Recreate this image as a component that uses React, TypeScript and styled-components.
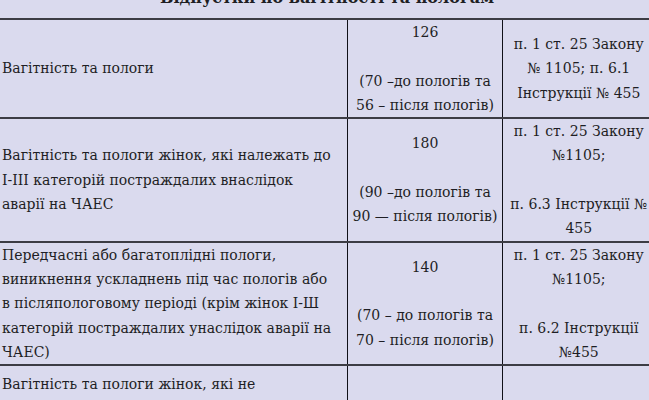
import React from "react";
import styled, { createGlobalStyle } from "styled-components";

const Global = createGlobalStyle`
  html, body {
    margin: 0;
    padding: 0;
    background: #dadaee;
    overflow: hidden;
  }
  body {
    font-family: "DejaVu Serif", "Liberation Serif", serif;
    color: #1e1e24;
  }
`;

const Page = styled.div`
  width: 649px;
  height: 400px;
  overflow: hidden;
`;

const Table = styled.table`
  border-collapse: collapse;
  table-layout: fixed;
  width: 655px;
  margin-top: -22px;
  margin-left: -1px;
  font-size: 14px;
  line-height: 24.3px;
`;

const Col = styled.col<{ $w: number }>`
  width: ${(p) => p.$w}px;
`;

const HeadCell = styled.th`
  font-weight: bold;
  font-size: 16px;
  text-align: center;
  padding: 0;
  height: 40px;
  border-bottom: 2px solid #3c3c44;
`;

const Row = styled.tr`
  border-top: 2px solid #3c3c44;
`;

const Cell = styled.td<{
  $align?: "left" | "center";
  $valign?: "top" | "middle";
  $padTop?: number;
}>`
  padding: ${(p) => p.$padTop ?? 0}px 2px 0;
  text-align: ${(p) => p.$align ?? "center"};
  vertical-align: ${(p) => p.$valign ?? "middle"};
  border-left: 1px solid #101018;
  border-bottom: 2px solid #3c3c44;
  &:first-child {
    border-left: 1px solid #b8c4f0;
  }
`;

const Line = styled.div`
  white-space: nowrap;
  min-height: 24.3px;
`;

type Item = {
  left: string[];
  mid: string[];
  midTop?: boolean;
  right: string[];
  padTop?: number;
};

const rows: Item[] = [
  {
    left: ["Вагітність та пологи"],
    mid: ["126", "", "(70 –до пологів та", "56 – після пологів)"],
    midTop: true,
    right: ["п. 1 ст. 25 Закону", "№ 1105; п. 6.1", "Інструкції № 455"],
  },
  {
    left: [
      "Вагітність та пологи жінок, які належать до",
      "I-III категорій постраждалих внаслідок",
      "аварії на ЧАЕС",
    ],
    mid: ["180", "", "(90 –до пологів та", "90 — після пологів)"],
    right: ["п. 1 ст. 25 Закону", "№1105;", "", "п. 6.3 Інструкції №", "455"],
  },
  {
    left: [
      "Передчасні або багатоплідні пологи,",
      "виникнення ускладнень під час пологів або",
      "в післяпологовому періоді (крім жінок I-Ш",
      "категорій постраждалих унаслідок аварії на",
      "ЧАЕС)",
    ],
    mid: ["140", "", "(70 – до пологів та", "70 – після пологів)"],
    right: ["п. 1 ст. 25 Закону", "№1105;", "", "п. 6.2 Інструкції", "№455"],
  },
  {
    left: ["Вагітність та пологи жінок, які не", "належать до I-III категорій"],
    mid: ["", ""],
    right: ["", ""],
    padTop: 6,
  },
];

const Lines = ({ items }: { items: string[] }) => (
  <>
    {items.map((t, i) => (
      <Line key={i}>{t || "\u00a0"}</Line>
    ))}
  </>
);

export default function App() {
  return (
    <Page>
      <Global />
      <Table>
        <colgroup>
          <Col $w={348} />
          <Col $w={155} />
          <Col $w={152} />
        </colgroup>
        <thead>
          <tr>
            <HeadCell colSpan={3}>Відпустки по вагітності та пологам</HeadCell>
          </tr>
        </thead>
        <tbody>
          {rows.map((r, i) => (
            <Row key={i}>
              <Cell $align="left" $padTop={r.padTop}>
                <Lines items={r.left} />
              </Cell>
              <Cell $valign={r.midTop ? "top" : "middle"} $padTop={r.padTop}>
                <Lines items={r.mid} />
              </Cell>
              <Cell $padTop={r.padTop}>
                <Lines items={r.right} />
              </Cell>
            </Row>
          ))}
        </tbody>
      </Table>
    </Page>
  );
}
